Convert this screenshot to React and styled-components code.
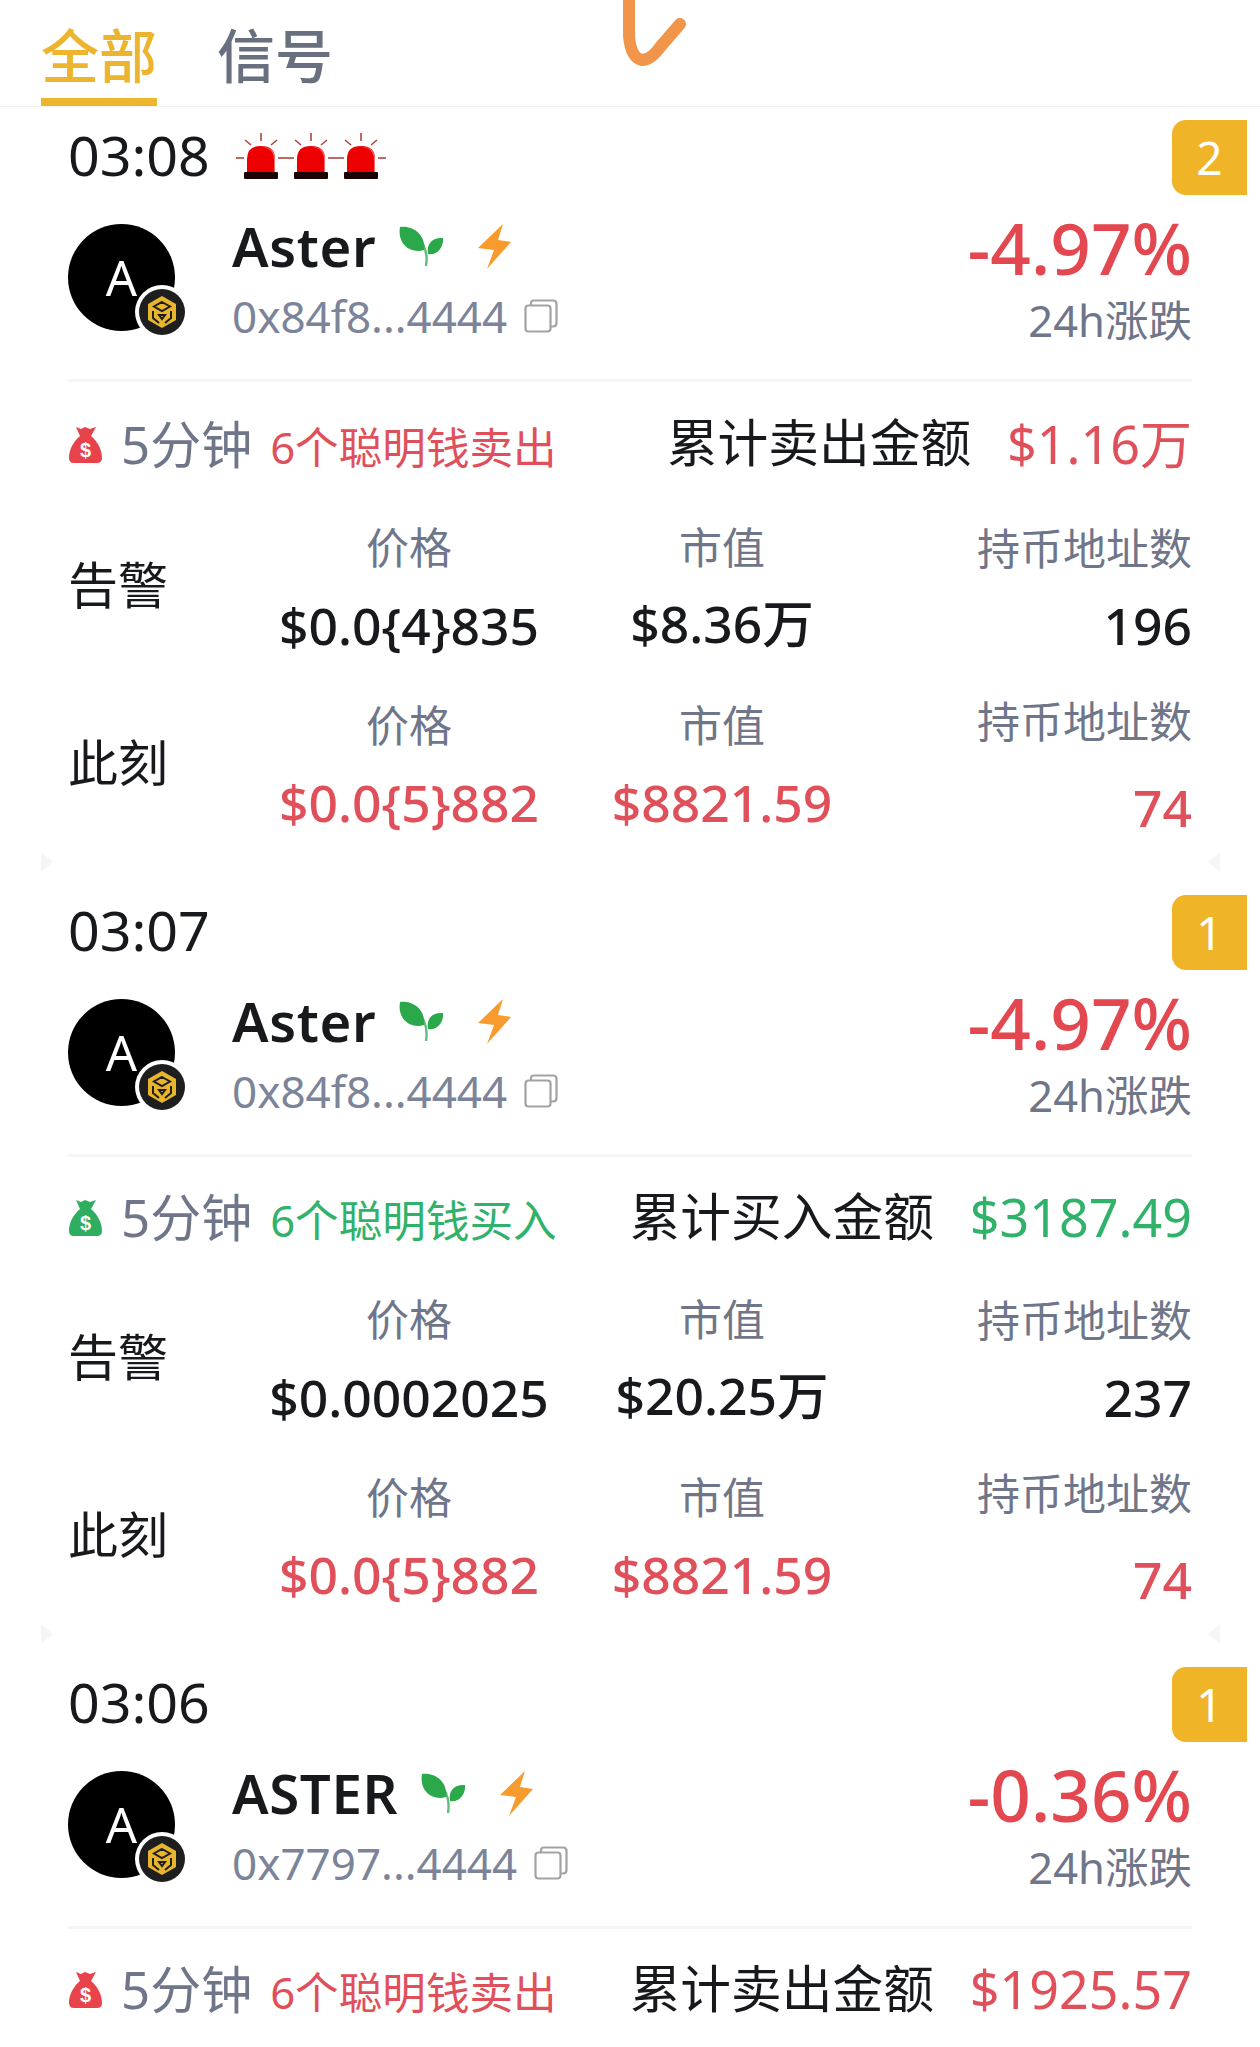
import styled, { createGlobalStyle } from 'styled-components';

const red = '#e3474f';
const softRed = '#e0505a';
const green = '#30b26a';
const gray = '#6f7689';
const ink = '#17191c';

const Global = createGlobalStyle`
  html, body { margin: 0; padding: 0; background: #fff; }
  body { font-family: "Noto Sans", "Noto Sans CJK SC", sans-serif; color: ${ink}; }
`;

const Page = styled.div`
  position: relative;
  width: 1260px;
  height: 2047px;
  overflow: hidden;
  background: #fff;
`;

const Tabs = styled.div`
  display: flex;
  gap: 60px;
  height: 106px;
  padding-left: 41px;
  border-bottom: 1px solid #f1f1f1;
`;

const Tab = styled.div`
  height: 106px;
  padding-top: 18px;
  box-sizing: border-box;
  font-size: 58px;
  line-height: 76px;
  font-weight: 500;
  color: ${p => (p.$active ? '#edb52e' : '#687080')};
  border-bottom: ${p => (p.$active ? '8px solid #edb52e' : 'none')};
`;

const Scribble = styled.svg`
  position: absolute;
  left: 615px;
  top: 0;
`;

const Card = styled.section`
  position: relative;
  height: ${p => p.$height}px;
  padding: 0 68px;
  box-sizing: border-box;
  &::before, &::after {
    content: "";
    display: ${p => (p.$notch ? 'block' : 'none')};
    position: absolute;
    bottom: 10px;
    width: 12px;
    height: 20px;
    background: #f6f6f6;
  }
  &::before { left: 41px; clip-path: polygon(0 0, 100% 50%, 0 100%); }
  &::after { right: 40px; clip-path: polygon(100% 0, 0 50%, 100% 100%); }
`;

const Rank = styled.div`
  position: absolute;
  top: 13px;
  right: 13px;
  width: 75px;
  height: 75px;
  border-radius: 14px 0 0 14px;
  background: #f0b429;
  color: #fff;
  font-size: 46px;
  line-height: 75px;
  text-align: center;
`;

const TimeRow = styled.div`
  display: flex;
  align-items: center;
  height: 98px;
`;

const Time = styled.div`
  font-size: 55.5px;
  line-height: 96px;
  width: 168px;
  margin-top: -2px;
`;

const Sirens = styled.div`
  display: flex;
`;

const TokenRow = styled.div`
  position: relative;
  display: flex;
  justify-content: space-between;
  height: 177px;
  padding-top: 19px;
  box-sizing: border-box;
  border-bottom: 3px solid #f5f5f5;
`;

const TokenLeft = styled.div`
  display: flex;
`;

const AvatarWrap = styled.div`
  position: relative;
  width: 107px;
  height: 107px;
  margin-right: 57px;
`;

const Avatar = styled.div`
  width: 107px;
  height: 107px;
  border-radius: 50%;
  background: #000;
  color: #fff;
  font-size: 49px;
  line-height: 107px;
  text-align: center;
`;

const ChainBadge = styled.svg`
  position: absolute;
  left: 67px;
  top: 61px;
`;

const TokenInfo = styled.div`
  display: flex;
  flex-direction: column;
`;

const NameRow = styled.div`
  display: flex;
  align-items: center;
  height: 50px;
  margin-top: -3px;
`;

const Name = styled.div`
  font-size: 54.5px;
  line-height: 50px;
  font-weight: 600;
  letter-spacing: 0.6px;
  margin-right: 22px;
`;

const Bolt = styled.svg`
  margin-left: 34px;
`;

const AddressRow = styled.div`
  display: flex;
  align-items: center;
  height: 50px;
  margin-top: 20px;
`;

const Address = styled.div`
  font-size: 44px;
  line-height: 50px;
  color: #7c849a;
  margin-right: 17px;
`;

const Change = styled.div`
  text-align: right;
`;

const Percent = styled.div`
  font-size: 71px;
  line-height: 70px;
  font-weight: 500;
  color: ${red};
  margin-top: -11px;
`;

const ChangeLabel = styled.div`
  font-size: 43.5px;
  line-height: 50px;
  color: ${gray};
  margin-top: 12px;
`;

const SignalRow = styled.div`
  display: flex;
  align-items: center;
  height: ${p => p.$height}px;
`;

const Bag = styled.svg`
  margin: 0 19px 0 1px;
`;

const Minutes = styled.div`
  font-size: 51px;
  line-height: 60px;
  color: ${gray};
  margin: -2px 18px 0 0;
`;

const SmartMoney = styled.div`
  font-size: 43.6px;
  line-height: 60px;
  color: ${p => p.$color};
  margin-top: 4px;
`;

const Total = styled.div`
  margin-left: auto;
  display: flex;
  align-items: center;
  gap: 36px;
  line-height: 60px;
`;

const TotalLabel = styled.span`
  font-size: 50.7px;
  margin-top: -3px;
`;

const TotalValue = styled.span`
  font-size: 52px;
  margin-top: -2px;
  color: ${p => p.$color};
`;

const DataRow = styled.div`
  display: grid;
  grid-template-columns: 195px 292px 334px 1fr;
  grid-template-rows: 76px 76px;
  row-gap: 4px;
  align-items: center;
  margin-bottom: 22px;
`;

const RowLabel = styled.div`
  grid-row: 1 / 3;
  font-size: 50px;
  line-height: 76px;
  margin-bottom: 1px;
`;

const Head = styled.div`
  font-size: 43px;
  line-height: 76px;
  color: ${gray};
  text-align: ${p => (p.$end ? 'right' : 'center')};
  transform: translateY(${p => p.$shift ?? 3}px);
`;

const Value = styled.div`
  font-size: 51.6px;
  line-height: 76px;
  font-weight: 500;
  color: ${p => (p.$red ? softRed : ink)};
  text-align: ${p => (p.$end ? 'right' : 'center')};
  white-space: nowrap;
  transform: translateY(${p => p.$shift ?? 0}px);
`;

const Siren = () => (
  <svg width="50" height="46" viewBox="0 0 50 46">
    <g stroke="#b0443f" strokeWidth="1.6">
      <line x1="25" y1="0" x2="25" y2="8" />
      <line x1="9" y1="7" x2="15" y2="12" />
      <line x1="41" y1="7" x2="35" y2="12" />
      <line x1="0" y1="25" x2="8" y2="25" />
      <line x1="42" y1="25" x2="50" y2="25" />
    </g>
    <path d="M11 40V26Q11 13 25 13Q39 13 39 26V40Z" fill="#ee0000" />
    <path d="M26 14Q38 15 38 27V40H39V26Q39 14 26 14Z" fill="#f56a6a" />
    <rect x="8" y="39" width="34" height="7" rx="1" fill="#1c0303" />
  </svg>
);

const Sprout = () => (
  <svg width="46" height="40" viewBox="0 0 46 40">
    <path d="M25 18Q30 28 28 40" fill="none" stroke="#62bb80" strokeWidth="2.4" />
    <path d="M2 1C16 -1 28 10 26 24C12 28 -1 18 2 1Z" fill="#2aa84a" />
    <path d="M45 12C46 22 38 30 30 28C28 16 36 11 45 12Z" fill="#2aa84a" />
  </svg>
);

const BoltIcon = () => (
  <Bolt width="34" height="46" viewBox="0 0 34 46">
    <path d="M25 1L0 25L16 27L9 46L33 19L20 17Z" fill="#f89b2e" />
  </Bolt>
);

const CopyIcon = () => (
  <svg width="34" height="34" viewBox="0 0 34 34" fill="none" stroke="#a3a3a6" strokeWidth="2.2">
    <rect x="1.5" y="6.5" width="25" height="26" rx="3" />
    <path d="M7 6V4Q7 1.5 10 1.5H29Q32.5 1.5 32.5 5V24Q32.5 27.5 29 27.5H27" />
  </svg>
);

const BnbBadge = () => (
  <ChainBadge width="54" height="54" viewBox="0 0 54 54">
    <circle cx="27" cy="27" r="27" fill="#fff" />
    <circle cx="27" cy="27" r="23" fill="#1e1e1e" />
    <path d="M27 11L41 19V35L27 43L13 35V19Z" fill="#e8b52e" />
    <path d="M27 17L35 21.5L27 26L19 21.5ZM18 26V33L24 38M36 26V33L30 38M24 30H30L27 34Z" fill="none" stroke="#1e1e1e" strokeWidth="2" />
  </ChainBadge>
);

const MoneyBag = ({ color }) => (
  <Bag width="33" height="38" viewBox="0 0 33 38">
    <path d="M7 1L12 3L16 1L21 3L27 1L22 10C29 16 33 24 33 32Q33 37 28 37H5Q0 37 0 32C0 24 4 16 11 10Z" fill={color} />
    <text x="16.5" y="31" textAnchor="middle" fontSize="20" fontWeight="700" fill="#fff" fontFamily="Liberation Sans, sans-serif">$</text>
  </Bag>
);

const cards = [
  {
    time: '03:08', sirens: 3, rank: 2, name: 'Aster', address: '0x84f8...4444', change: '-4.97%',
    side: 'sell', total: '$1.16万', height: 775, signal: 125, notch: true,
    alert: { price: '$0.0{4}835', cap: '$8.36万', holders: '196' },
    now: { price: '$0.0{5}882', cap: '$8821.59', holders: '74' },
  },
  {
    time: '03:07', sirens: 0, rank: 1, name: 'Aster', address: '0x84f8...4444', change: '-4.97%',
    side: 'buy', total: '$3187.49', height: 772, signal: 122, notch: true,
    alert: { price: '$0.0002025', cap: '$20.25万', holders: '237' },
    now: { price: '$0.0{5}882', cap: '$8821.59', holders: '74' },
  },
  {
    time: '03:06', sirens: 0, rank: 1, name: 'ASTER', address: '0x7797...4444', change: '-0.36%',
    side: 'sell', total: '$1925.57', height: 400, signal: 122,
  },
];

const SignalCard = ({ card }) => {
  const sell = card.side === 'sell';
  const color = sell ? softRed : green;
  return (
    <Card $height={card.height} $notch={card.notch}>
      <Rank>{card.rank}</Rank>
      <TimeRow>
        <Time>{card.time}</Time>
        {card.sirens > 0 && (
          <Sirens>
            {Array.from({ length: card.sirens }, (_, i) => <Siren key={i} />)}
          </Sirens>
        )}
      </TimeRow>
      <TokenRow>
        <TokenLeft>
          <AvatarWrap>
            <Avatar>A</Avatar>
            <BnbBadge />
          </AvatarWrap>
          <TokenInfo>
            <NameRow>
              <Name>{card.name}</Name>
              <Sprout />
              <BoltIcon />
            </NameRow>
            <AddressRow>
              <Address>{card.address}</Address>
              <CopyIcon />
            </AddressRow>
          </TokenInfo>
        </TokenLeft>
        <Change>
          <Percent>{card.change}</Percent>
          <ChangeLabel>24h涨跌</ChangeLabel>
        </Change>
      </TokenRow>
      <SignalRow $height={card.signal}>
        <MoneyBag color={sell ? '#e8434b' : '#2fae5f'} />
        <Minutes>5分钟</Minutes>
        <SmartMoney $color={color}>6个聪明钱{sell ? '卖出' : '买入'}</SmartMoney>
        <Total>
          <TotalLabel>累计{sell ? '卖出' : '买入'}金额</TotalLabel>
          <TotalValue $color={color}>{card.total}</TotalValue>
        </Total>
      </SignalRow>
      {card.alert && (
        <DataRow>
          <RowLabel>告警</RowLabel>
          <Head>价格</Head>
          <Head>市值</Head>
          <Head $end $shift={4}>持币地址数</Head>
          <Value>{card.alert.price}</Value>
          <Value $shift={-2}>{card.alert.cap}</Value>
          <Value $end>{card.alert.holders}</Value>
        </DataRow>
      )}
      {card.now && (
        <DataRow>
          <RowLabel>此刻</RowLabel>
          <Head>价格</Head>
          <Head>市值</Head>
          <Head $end $shift={-1}>持币地址数</Head>
          <Value $red $shift={-1}>{card.now.price}</Value>
          <Value $red $shift={-1}>{card.now.cap}</Value>
          <Value $red $end $shift={4}>{card.now.holders}</Value>
        </DataRow>
      )}
    </Card>
  );
};

const App = () => (
  <Page>
    <Global />
    <Tabs>
      <Tab $active>全部</Tab>
      <Tab>信号</Tab>
    </Tabs>
    <Scribble width="80" height="72" viewBox="0 0 80 72">
      <path d="M14 0V36Q16 58 27 60Q36 60 46 46L65 24" fill="none" stroke="#f0954a" strokeWidth="12" strokeLinecap="round" />
    </Scribble>
    {cards.map(card => <SignalCard key={card.time} card={card} />)}
  </Page>
);

export default App;
